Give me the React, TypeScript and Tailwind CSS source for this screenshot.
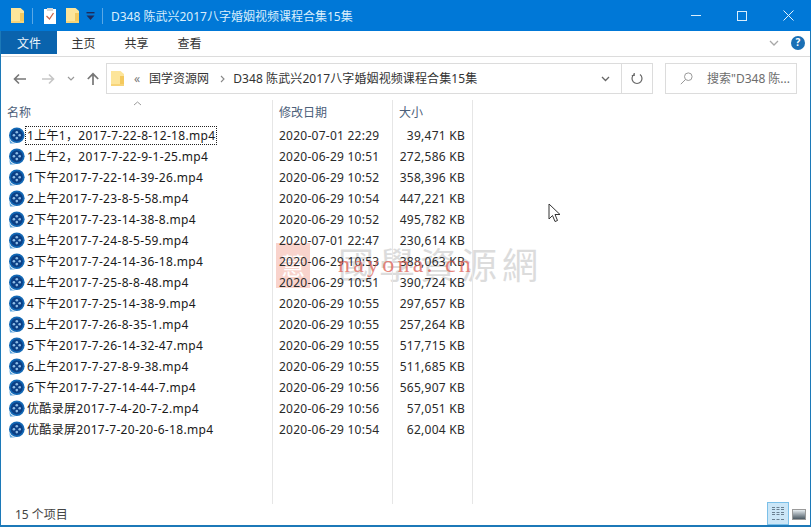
import React from "react";

const F = "[font-family:'Noto_Sans','Noto_Sans_CJK_SC',sans-serif]";

const files: [string, string, string][] = [
  ["1上午1，2017-7-22-8-12-18.mp4", "2020-07-01 22:29", "39,471 KB"],
  ["1上午2，2017-7-22-9-1-25.mp4", "2020-06-29 10:51", "272,586 KB"],
  ["1下午2017-7-22-14-39-26.mp4", "2020-06-29 10:52", "358,396 KB"],
  ["2上午2017-7-23-8-5-58.mp4", "2020-06-29 10:54", "447,221 KB"],
  ["2下午2017-7-23-14-38-8.mp4", "2020-06-29 10:52", "495,782 KB"],
  ["3上午2017-7-24-8-5-59.mp4", "2020-07-01 22:47", "230,614 KB"],
  ["3下午2017-7-24-14-36-18.mp4", "2020-06-29 10:53", "388,063 KB"],
  ["4上午2017-7-25-8-8-48.mp4", "2020-06-29 10:51", "390,724 KB"],
  ["4下午2017-7-25-14-38-9.mp4", "2020-06-29 10:55", "297,657 KB"],
  ["5上午2017-7-26-8-35-1.mp4", "2020-06-29 10:55", "257,264 KB"],
  ["5下午2017-7-26-14-32-47.mp4", "2020-06-29 10:55", "517,715 KB"],
  ["6上午2017-7-27-8-9-38.mp4", "2020-06-29 10:55", "511,685 KB"],
  ["6下午2017-7-27-14-44-7.mp4", "2020-06-29 10:56", "565,907 KB"],
  ["优酷录屏2017-7-4-20-7-2.mp4", "2020-06-29 10:56", "57,051 KB"],
  ["优酷录屏2017-7-20-20-6-18.mp4", "2020-06-29 10:54", "62,004 KB"],
];

function Folder({ className = "" }: { className?: string }) {
  return (
    <svg width="13" height="15" viewBox="0 0 13 15" className={className}>
      <path d="M0 0h9.5L13 3v12H0z" fill="#fde59a" />
      <path d="M9 5h4v8.5H9z" fill="#f4c95e" />
      <path d="M0 13h13v2H0z" fill="#f7d479" />
    </svg>
  );
}

function VideoIcon() {
  return (
    <svg width="17" height="17" viewBox="0 0 17 17" className="shrink-0">
      <circle cx="8.8" cy="8.2" r="7.8" fill="#1268b5" />
      <path d="M1 9c0 4 3 7.5 7 7.5H2z" fill="#5ba6e0" />
      <circle cx="8.8" cy="8.2" r="6" fill="#0b3f85" />
      <circle cx="8.8" cy="5.3" r="1.3" fill="#8fbde6" />
      <circle cx="8.8" cy="11.1" r="1.3" fill="#8fbde6" />
      <circle cx="5.9" cy="8.2" r="1.3" fill="#8fbde6" />
      <circle cx="11.7" cy="8.2" r="1.3" fill="#8fbde6" />
    </svg>
  );
}

function Row({ f, first }: { f: [string, string, string]; first: boolean }) {
  return (
    <div className="flex h-[21px] items-center tracking-[0.25px]">
      <div className="flex w-[272px] items-center pl-[7px]">
        <VideoIcon />
        <span
          className={
            "ml-[1px] whitespace-nowrap pl-[1px] pr-[1px] text-[12px] leading-[17px] tracking-[0.32px] text-[#1a1a1a] " +
            (first ? "outline-1 outline-dotted outline-[#222]" : "")
          }
        >
          {f[0]}
        </span>
      </div>
      <div className="w-[120px] whitespace-nowrap pl-[6px] text-[12px] text-[#2a2a2a]">{f[1]}</div>
      <div className="w-[72px] whitespace-nowrap text-right text-[12px] text-[#2a2a2a]">{f[2]}</div>
    </div>
  );
}

export default function App() {
  return (
    <div className={`${F} relative flex h-[527px] w-[811px] flex-col overflow-hidden bg-white`}>
      {/* title bar */}
      <div className="flex h-[31px] shrink-0 items-center bg-[#0078d7] pl-[11px] text-white">
        <Folder />
        <div className="ml-[8px] h-[16px] w-px bg-[#5aa8e6]" />
        <svg width="12" height="16" viewBox="0 0 12 16" className="ml-[11px]">
          <rect x="0" y="1" width="12" height="15" fill="#fff" />
          <rect x="3" y="0" width="6" height="3" fill="#d8d8d8" />
          <path d="M2.5 8l3 3 4-6" stroke="#c8654c" strokeWidth="1.3" fill="none" />
        </svg>
        <Folder className="ml-[10px]" />
        <svg width="9" height="10" viewBox="0 0 9 10" className="ml-[7px]">
          <rect x="0.5" y="1" width="8" height="1.4" fill="#1e2a5a" />
          <path d="M0.5 4.5h8L4.5 9z" fill="#1e2a5a" />
        </svg>
        <div className="ml-[7px] h-[16px] w-px bg-[#5aa8e6]" />
        <span className="ml-[8px] whitespace-nowrap pt-[2px] text-[12px] text-[#d9eefc]">D348 陈武兴2017八字婚姻视频课程合集15集</span>
        <div className="ml-auto flex h-full items-center">
          <div className="flex h-full w-[46px] items-center justify-center">
            <div className="h-px w-[10px] bg-[#d9eefc]" />
          </div>
          <div className="flex h-full w-[46px] items-center justify-center">
            <div className="h-[10px] w-[10px] border border-[#d9eefc]" />
          </div>
          <div className="flex h-full w-[46px] items-center justify-center">
            <svg width="11" height="11" viewBox="0 0 11 11">
              <path d="M0.5 0.5l10 10M10.5 0.5l-10 10" stroke="#e4f3fd" strokeWidth="1" />
            </svg>
          </div>
        </div>
      </div>

      {/* content with blue side frame */}
      <div className="flex min-h-0 flex-1 flex-col border-x border-b-2 border-[#1c79b8]">
        {/* ribbon */}
        <div className="flex h-[26px] shrink-0 items-start border-b border-[#dcdcdc] text-[12px] text-[#333]">
          <div className="flex h-[23px] w-[56px] items-center justify-center bg-[#0a63ad] pt-[2px] text-[#eef6fc]">文件</div>
          <div className="flex h-[23px] w-[53px] items-center justify-center pt-[2px]">主页</div>
          <div className="flex h-[23px] w-[53px] items-center justify-center pt-[2px]">共享</div>
          <div className="flex h-[23px] w-[53px] items-center justify-center pt-[2px]">查看</div>
          <div className="ml-auto flex h-[23px] items-center pr-[5px]">
            <svg width="10" height="6" viewBox="0 0 10 6" className="mr-[12px]">
              <path d="M1 1l4 4 4-4" stroke="#a8a8a8" strokeWidth="1.3" fill="none" />
            </svg>
            <div className="flex h-[14px] w-[14px] items-center justify-center rounded-full bg-[#1a6fb5] text-[10px] font-bold text-white">?</div>
          </div>
        </div>

        {/* address bar */}
        <div className="flex h-[43px] shrink-0 items-center pl-[12px] pr-[13px]">
          <svg width="14" height="12" viewBox="0 0 14 12" className="shrink-0">
            <path d="M13 6H1.5M6 1.5L1.5 6 6 10.5" stroke="#777" strokeWidth="1.6" fill="none" />
          </svg>
          <svg width="14" height="12" viewBox="0 0 14 12" className="ml-[14px] shrink-0">
            <path d="M1 6h11.5M8 1.5L12.5 6 8 10.5" stroke="#c6c6c6" strokeWidth="1.6" fill="none" />
          </svg>
          <svg width="8" height="5" viewBox="0 0 8 5" className="ml-[12px] shrink-0">
            <path d="M1 1l3 3 3-3" stroke="#999" strokeWidth="1.2" fill="none" />
          </svg>
          <svg width="14" height="14" viewBox="0 0 14 14" className="ml-[11px] shrink-0">
            <path d="M7 13V2M1.8 7L7 1.8 12.2 7" stroke="#777" strokeWidth="1.7" fill="none" />
          </svg>
          <div className="ml-[6px] flex h-[31px] w-[547px] shrink-0 items-center border border-[#dcdcdc] pl-[4px] text-[12px] text-[#333]">
            <Folder />
            <span className="ml-[10px] text-[#777]">«</span>
            <span className="ml-[9px] whitespace-nowrap">国学资源网</span>
            <svg width="6" height="8" viewBox="0 0 6 8" className="ml-[11px]">
              <path d="M1 1l3 3-3 3" stroke="#888" strokeWidth="1.1" fill="none" />
            </svg>
            <span className="ml-[7px] whitespace-nowrap tracking-[0.1px]">D348 陈武兴2017八字婚姻视频课程合集15集</span>
            <svg width="9" height="6" viewBox="0 0 9 6" className="ml-auto mr-[11px]">
              <path d="M1 1l3.5 3.5L8 1" stroke="#666" strokeWidth="1.3" fill="none" />
            </svg>
            <div className="flex h-full w-[31px] items-center justify-center border-l border-[#dcdcdc]">
              <svg width="12" height="13" viewBox="0 0 12 13">
                <path d="M3 2.5a5 5 0 1 0 6 0M3.2 1v2.5H0.8" stroke="#666" strokeWidth="1.2" fill="none" />
              </svg>
            </div>
          </div>
          <div className="ml-[12px] flex h-[31px] flex-1 items-center border border-[#dcdcdc] pl-[14px] text-[12px] text-[#6d6d6d]">
            <svg width="13" height="13" viewBox="0 0 13 13" className="shrink-0">
              <circle cx="8.3" cy="4.7" r="3.8" stroke="#999" fill="none" />
              <path d="M5.5 7.5L0.8 12.2" stroke="#999" />
            </svg>
            <span className="ml-[14px] whitespace-nowrap">搜索"D348 陈...</span>
          </div>
        </div>

        {/* list */}
        <div className="relative flex min-h-0 flex-1 flex-col">
          {/* watermark behind the rows */}
          <div className="pointer-events-none absolute left-[275px] top-[143px] flex items-center">
            <div className="flex h-[45px] w-[34px] items-center justify-center bg-[#f9d3cc] text-[24px] text-white">慧</div>
            <span className="ml-[28px] whitespace-nowrap text-[36px] leading-none tracking-[5px] text-[#dcdcdc]">國學資源網</span>
          </div>
          <div className="relative flex h-[25px] shrink-0 items-center text-[12px] text-[#4c607a]">
            <div className="w-[272px] pl-[6px]">名称</div>
            <div className="w-[120px] pl-[6px]">修改日期</div>
            <div className="pl-[6px]">大小</div>
          </div>
          <svg width="9" height="5" viewBox="0 0 9 5" className="absolute left-[132px] top-[1px]">
            <path d="M1 4l3.5-3L8 4" stroke="#9a9a9a" fill="none" />
          </svg>
          <div className="absolute bottom-[21px] left-[271px] top-0 w-px bg-[#e6e6e6]" />
          <div className="absolute bottom-[21px] left-[391px] top-0 w-px bg-[#e6e6e6]" />
          <div className="absolute bottom-[21px] left-[471px] top-0 w-px bg-[#e6e6e6]" />
          <div className="relative flex flex-col">
            {files.map((f, i) => (
              <Row key={f[0]} f={f} first={i === 0} />
            ))}
          </div>

          {/* status bar */}
          <div className="mt-auto flex h-[21px] shrink-0 items-center justify-between pl-[14px] text-[12px] text-[#444]">
            <span>15 个项目</span>
            <div className="flex items-end self-end pr-[4px]">
              <div className="flex h-[23px] w-[22px] flex-col justify-center gap-[2px] border border-[#7cc0e8] bg-[#cbe6f7] px-[4px]">
                <div className="h-[3px] border-y border-dashed border-[#6a7f90]" />
                <div className="h-[3px] border-y border-dashed border-[#6a7f90]" />
                <div className="h-[3px] border-b border-dashed border-[#6a7f90]" />
              </div>
              <div className="mb-[5px] ml-[3px] h-[11px] w-[14px] border border-[#9a9a9a] bg-gradient-to-b from-[#e8eef2] to-[#4c5a64]" />
            </div>
          </div>
        </div>
      </div>

      {/* watermark url */}
      <div className="pointer-events-none absolute left-[338px] top-[252px] whitespace-nowrap font-['Liberation_Serif',serif] text-[24px] leading-none tracking-[3.2px] text-[#e0665a]/80">
        nayona. cn
      </div>

      {/* cursor */}
      <svg width="13" height="21" viewBox="0 0 13 21" className="pointer-events-none absolute left-[548px] top-[203px]">
        <path d="M1 1v15l3.5-3.5 2.5 6 2.5-1-2.5-6h5z" fill="#fff" stroke="#333" strokeWidth="1" />
      </svg>
    </div>
  );
}
